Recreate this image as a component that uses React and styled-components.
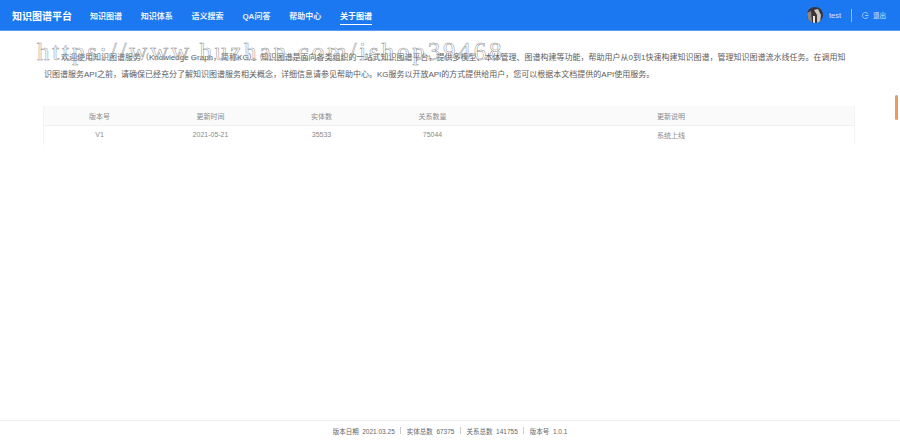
import React from "react";
import styled, { createGlobalStyle } from "styled-components";

const Global = createGlobalStyle`
  html, body { margin: 0; padding: 0; background: #fff; }
  body { font-family: "Liberation Sans", "Noto Sans CJK SC", sans-serif; overflow: hidden; }
`;
const Page = styled.div`
  position: relative; width: 900px; height: 440px; display: flex; flex-direction: column; overflow: hidden;
`;
const Header = styled.header`
  height: 30px; flex: none; display: flex; align-items: center; background: #1b78f0;
  border-bottom: 1px solid #5a9cf2; padding: 0 14px 0 12px; color: #fff;
`;
const Logo = styled.div`
  font-size: 10px; font-weight: 700; width: 78px; white-space: nowrap;
`;
const Nav = styled.nav`
  display: flex; gap: 18.8px; height: 100%; flex: 1;
`;
const NavItem = styled.a`
  position: relative; display: flex; align-items: center; justify-content: center;
  font-size: 8px; font-weight: 700; color: ${p => (p.$active ? "#fff" : "#e8f1fe")}; white-space: nowrap;
  &::after {
    content: ""; display: ${p => (p.$active ? "block" : "none")};
    position: absolute; left: 0; right: 0; top: 24px; height: 1px; background: #fff;
  }
`;
const UserArea = styled.div`
  display: flex; align-items: center;
`;
const Avatar = styled.svg`
  width: 16px; height: 16px; border-radius: 50%; display: block;
`;
const UserName = styled.span`
  font-size: 7.5px; color: #d5e5fc; margin-left: 6px;
`;
const Divider = styled.span`
  width: 1px; height: 13px; background: #8fbcf7; margin: 0 10px;
`;
const Logout = styled.span`
  display: flex; align-items: center; gap: 4px; font-size: 6.5px; color: #d5e5fc;
`;
const Main = styled.main`
  flex: 1; display: flex; flex-direction: column; padding: 18px 45px 0 44px;
`;
const Intro = styled.p`
  margin: 0; max-width: 806px; font-size: 8px; line-height: 17px; color: #5c5c5c; text-indent: 17px; height: 40px;
`;
const Table = styled.div`
  margin: 17px 0 0 -1px; width: 812px; display: grid; grid-template-columns: 111px 111px 111px 111px 1fr;
  border-left: 1px solid #f3f3f3; border-right: 1px solid #f3f3f3; box-sizing: border-box;
`;
const HeadCell = styled.div`
  height: 20px; background: #fafafa; border-bottom: 1px solid #f0f0f0; display: flex;
  align-items: center; justify-content: center; font-size: 7px; color: #8a8a8a; box-sizing: border-box;
`;
const Cell = styled.div`
  height: 19px; padding-bottom: 2px; box-sizing: border-box; display: flex; align-items: center;
  justify-content: center; font-size: 7px; color: #8a8a8a;
`;
const Footer = styled.footer`
  height: 19px; flex: none; border-top: 1px solid #eee; display: flex; align-items: center;
  justify-content: center; font-size: 6.5px; color: #666;
`;
const FootItem = styled.span`
  white-space: pre;
`;
const FootBar = styled.span`
  width: 1px; height: 7px; background: #ccc; margin: 0 5.5px;
`;
const Watermark = styled.div`
  position: absolute; left: 37px; top: 38px; font-family: "Liberation Serif", serif; font-size: 25px;
  letter-spacing: 2.85px; color: rgba(255,255,255,0.15); -webkit-text-stroke: 0.5px #8f8f8f;
  white-space: nowrap; pointer-events: none;
`;
const ScrollMark = styled.div`
  position: absolute; left: 895px; top: 95px; width: 3px; height: 25px; border-radius: 2px;
  background: linear-gradient(#a9a9a9 0, #ee9a5c 14%, #ee9a5c 100%);
`;

const nav = ["知识图谱", "知识体系", "语义搜索", "QA问答", "帮助中心", "关于图谱"];
const heads = ["版本号", "更新时间", "实体数", "关系数量", "更新说明"];
const row = ["V1", "2021-05-21", "35533", "75044", "系统上线"];

export default function App() {
  return (
    <Page>
      <Global />
      <Header>
        <Logo>知识图谱平台</Logo>
        <Nav>
          {nav.map((n, i) => <NavItem key={n} $active={i === 5}>{n}</NavItem>)}
        </Nav>
        <UserArea>
          <Avatar viewBox="0 0 16 16">
            <rect width="16" height="16" fill="#3a3438" />
            <path d="M7 3 L11 2 L14 8 L13 16 L10 16 L10 8 Z" fill="#c9c5c2" />
            <path d="M0 6 L4 4 L5 16 L1 16 Z" fill="#8d8580" />
            <path d="M6 9 L8 9 L8 16 L6 16 Z" fill="#e8e4e2" />
          </Avatar>
          <UserName>test</UserName>
          <Divider />
          <Logout>
            <svg width="7" height="7" viewBox="0 0 8 8" fill="none" stroke="#d5e5fc" strokeWidth="0.8">
              <path d="M6.8 2.2 A3.4 3.4 0 1 0 6.8 5.8" />
              <path d="M3.5 4 H7.5" />
            </svg>
            退出
          </Logout>
        </UserArea>
      </Header>
      <Main>
        <Intro>
          欢迎使用知识图谱服务（Knowledge Graph，简称KG）。知识图谱是面向各类组织的一站式知识图谱平台，提供多模型、本体管理、图谱构建等功能，帮助用户从0到1快速构建知识图谱，管理知识图谱流水线任务。在调用知识图谱服务API之前，请确保已经充分了解知识图谱服务相关概念，详细信息请参见帮助中心。KG服务以开放API的方式提供给用户，您可以根据本文档提供的API使用服务。
        </Intro>
        <Table>
          {heads.map(h => <HeadCell key={h}>{h}</HeadCell>)}
          {row.map(c => <Cell key={c}>{c}</Cell>)}
        </Table>
      </Main>
      <Footer>
        <FootItem>版本日期  2021.03.25</FootItem><FootBar />
        <FootItem>实体总数  67375</FootItem><FootBar />
        <FootItem>关系总数  141755</FootItem><FootBar />
        <FootItem>版本号  1.0.1</FootItem>
      </Footer>
      <Watermark>https://www.huzhan.com/ishop39468</Watermark>
      <ScrollMark />
    </Page>
  );
}
